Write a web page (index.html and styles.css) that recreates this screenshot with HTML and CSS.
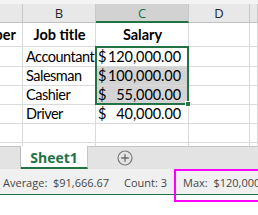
FILE: index.html
```html
<!DOCTYPE html>
<html>
<head>
<meta charset="utf-8">
<link rel="stylesheet" href="styles.css">
</head>
<body>
<div class="app">
  <div class="topband"></div>
  <div class="grid">
    <div class="ch"></div>
    <div class="ch">B</div>
    <div class="ch ch-sel">C</div>
    <div class="ch">D</div>
    <div class="ch"></div>

    <div class="c bold end"><span>Number</span></div>
    <div class="c bold center">Job title</div>
    <div class="c bold center">Salary</div>
    <div class="c"></div>
    <div class="c"></div>

    <div class="c"></div>
    <div class="c text">Accountant</div>
    <div class="c acct"><span>$</span><span>120,000.00</span></div>
    <div class="c"></div>
    <div class="c"></div>

    <div class="c"></div>
    <div class="c text">Salesman</div>
    <div class="c acct shade"><span>$</span><span>100,000.00</span></div>
    <div class="c"></div>
    <div class="c"></div>

    <div class="c"></div>
    <div class="c text">Cashier</div>
    <div class="c acct shade"><span>$</span><span>55,000.00</span></div>
    <div class="c"></div>
    <div class="c"></div>

    <div class="c"></div>
    <div class="c text">Driver</div>
    <div class="c acct"><span>$</span><span>40,000.00</span></div>
    <div class="c"></div>
    <div class="c"></div>

    <div class="c"></div>
    <div class="c"></div>
    <div class="c"></div>
    <div class="c"></div>
    <div class="c"></div>

    <div class="c last"></div>
    <div class="c last"></div>
    <div class="c last"></div>
    <div class="c last"></div>
    <div class="c last"></div>

    <div class="selection"><i class="handle"></i></div>
  </div>

  <div class="tabbar">
    <div class="tab-lead"></div>
    <div class="tab">Sheet1</div>
    <div class="add">
      <svg width="16" height="16" viewBox="0 0 16 16">
        <circle cx="8" cy="8" r="7" fill="none" stroke="#7a7a7a" stroke-width="1.2"/>
        <path d="M8 4.2v7.6M4.2 8h7.6" stroke="#6a6a6a" stroke-width="1.3"/>
      </svg>
    </div>
  </div>

  <div class="status">
    <span class="stat avg">Average:&nbsp; $91,666.67</span>
    <span class="stat cnt">Count: 3</span>
    <span class="stat max">Max:&nbsp; $120,000</span>
    <div class="mark"></div>
  </div>
</div>
</body>
</html>
```

FILE: styles.css
```css
* { box-sizing: border-box; }
html, body { margin: 0; padding: 0; background: #fff; }
body { width: 258px; height: 215px; overflow: hidden; }

.app { position: relative; width: 258px; height: 215px; overflow: hidden; }

.topband { height: 4px; background: #f3f3f3; }

.grid {
  position: relative;
  display: grid;
  grid-template-columns: 23px 73px 93px 61px 1fr;
  grid-template-rows: 19px 24px 20px 19px 19px 19px 19px 3px;
  font-family: "Lato", "Liberation Sans", sans-serif;
  font-size: 14.5px;
  color: #000;
}

.ch {
  background: #e8e8e8;
  border-right: 1px solid #c8c8c8;
  border-bottom: 1px solid #c0c0c0;
  font-family: "Open Sans", "Noto Sans", sans-serif;
  font-size: 13px;
  color: #262626;
  display: flex;
  align-items: center;
  justify-content: center;
  line-height: 1;
  padding-top: 1px;
}
.ch-sel {
  background: #d2d2d2;
  color: #217346;
  border-bottom: 2px solid #217346;
}

.c {
  border-right: 1px solid #dadada;
  border-bottom: 1px solid #dadada;
  display: flex;
  align-items: flex-end;
  padding: 0 2px 2px 3px;
  line-height: 1;
  white-space: nowrap;
  overflow: hidden;
}
.c.last { border-bottom: none; }
.text { letter-spacing: -0.5px; }
.bold { font-weight: 700; padding-bottom: 4px; }
.center { justify-content: center; }
.end { justify-content: flex-end; padding-right: 6px; }
.acct { justify-content: space-between; padding-left: 2px; padding-right: 7px; letter-spacing: -0.1px; }
.shade { background: #d4d4d4; }

.selection {
  position: absolute;
  grid-column: 3 / 4;
  grid-row: 3 / 6;
  top: -1px;
  left: -1px;
  right: 0;
  bottom: 0;
  border: 2px solid #217346;
}
.handle {
  position: absolute;
  right: -4px;
  bottom: -4px;
  width: 6px;
  height: 6px;
  background: #217346;
  border: 1px solid #fff;
}

.tabbar {
  height: 23px;
  background: #e3e3e3;
  border-top: 1px solid #c6c6c6;
  display: flex;
  align-items: stretch;
}
.tab-lead { width: 21px; border-right: 1px solid #b9b9b9; }
.tab {
  width: 67px;
  background: #fff;
  border-right: 1px solid #c6c6c6;
  border-bottom: 2px solid #217346;
  margin-top: -1px;
  color: #217346;
  font-family: "Open Sans", "Noto Sans", sans-serif;
  font-weight: 700;
  font-size: 14px;
  display: flex;
  align-items: center;
  justify-content: center;
  padding-top: 1px;
}
.add {
  margin-left: 29px;
  display: flex;
  align-items: center;
}

.status {
  position: relative;
  height: 26px;
  background: #f0f0f0;
  border-bottom: 1px solid #217346;
  display: flex;
  align-items: center;
  font-family: "Open Sans", "Noto Sans", sans-serif;
  font-size: 11px;
  color: #474747;
  white-space: nowrap;
  padding-left: 3px;
  padding-top: 2px;
}
.cnt { margin-left: 15px; }
.max { margin-left: 16px; }
.mark {
  position: absolute;
  left: 174px;
  top: 0;
  width: 100px;
  height: 33px;
  border: 2px solid #f0f;
}
```
